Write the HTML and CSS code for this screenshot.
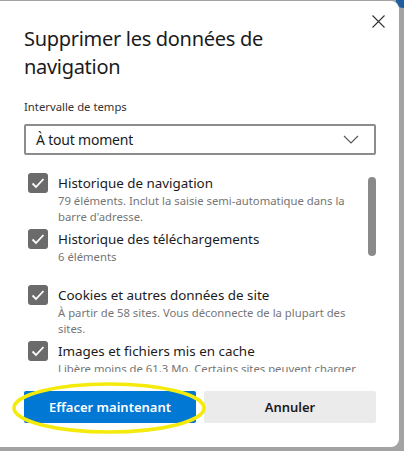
FILE: index.html
```html
<!DOCTYPE html>
<html lang="fr">
<head>
<meta charset="utf-8">
<link rel="stylesheet" href="styles.css">
</head>
<body>
<div class="backdrop">
  <span class="bg-dot"></span>
  <div class="dialog">
    <button class="close" aria-label="Fermer">
      <svg width="13" height="13" viewBox="0 0 13 13"><path d="M0.5 0.5L12.5 12.5M12.5 0.5L0.5 12.5" stroke="#333" stroke-width="1.1" fill="none"/></svg>
    </button>
    <h1 class="title">Supprimer les données de navigation</h1>
    <div class="field-label">Intervalle de temps</div>
    <div class="select">
      <span>À tout moment</span>
      <svg width="16" height="9" viewBox="0 0 16 9"><path d="M1 1L8 8L15 1" stroke="#555" stroke-width="1.1" fill="none"/></svg>
    </div>
    <div class="list-wrap">
      <div class="list">
        <div class="item">
          <span class="check"><svg width="14" height="12" viewBox="0 0 14 12"><path d="M1.5 6.5L5 10L12.5 2" stroke="#fff" stroke-width="1.8" fill="none"/></svg></span>
          <div class="text">
            <div class="label">Historique de navigation</div>
            <div class="desc">79 éléments. Inclut la saisie semi-automatique dans la barre d'adresse.</div>
          </div>
        </div>
        <div class="item">
          <span class="check"><svg width="14" height="12" viewBox="0 0 14 12"><path d="M1.5 6.5L5 10L12.5 2" stroke="#fff" stroke-width="1.8" fill="none"/></svg></span>
          <div class="text">
            <div class="label">Historique des téléchargements</div>
            <div class="desc">6 éléments</div>
          </div>
        </div>
        <div class="item">
          <span class="check"><svg width="14" height="12" viewBox="0 0 14 12"><path d="M1.5 6.5L5 10L12.5 2" stroke="#fff" stroke-width="1.8" fill="none"/></svg></span>
          <div class="text">
            <div class="label">Cookies et autres données de site</div>
            <div class="desc">À partir de 58 sites. Vous déconnecte de la plupart des sites.</div>
          </div>
        </div>
        <div class="item">
          <span class="check"><svg width="14" height="12" viewBox="0 0 14 12"><path d="M1.5 6.5L5 10L12.5 2" stroke="#fff" stroke-width="1.8" fill="none"/></svg></span>
          <div class="text">
            <div class="label">Images et fichiers mis en cache</div>
            <div class="desc">Libère moins de 61,3 Mo. Certains sites peuvent charger plus lentement lors de votre prochaine visite.</div>
          </div>
        </div>
      </div>
      <div class="scrollbar"><span class="thumb"></span></div>
    </div>
    <div class="footer">
      <button class="btn primary">Effacer maintenant</button>
      <button class="btn secondary">Annuler</button>
      <svg class="highlight" width="194" height="52" viewBox="0 0 194 52"><ellipse cx="97" cy="26" rx="95" ry="24" fill="none" stroke="#f4ea0c" stroke-width="3.5"/></svg>
    </div>
  </div>
</div>
</body>
</html>
```

FILE: styles.css
```css
* { box-sizing: border-box; }
html, body { margin: 0; padding: 0; }
body {
  width: 404px;
  height: 451px;
  overflow: hidden;
  background: #a3a3a3;
  font-family: "Noto Sans", "Open Sans", sans-serif;
}
.backdrop {
  position: relative;
  width: 404px;
  height: 451px;
  padding-top: 1px;
}
.bg-dot {
  position: absolute;
  right: -6px;
  top: -6px;
  width: 14px;
  height: 14px;
  border-radius: 50%;
  background: #1f5f9e;
}
.dialog {
  position: relative;
  width: 399px;
  height: 446px;
  background: #fff;
  border-radius: 0 8px 8px 0;
  padding: 24px 23px 0 24px;
  display: flex;
  flex-direction: column;
}
.close {
  position: absolute;
  top: 13px;
  right: 13px;
  width: 15px;
  height: 15px;
  padding: 1px;
  border: 0;
  background: transparent;
  display: flex;
}
.title {
  margin: 0;
  font-size: 20px;
  letter-spacing: -0.3px;
  line-height: 28px;
  font-weight: 400;
  color: #1b1b1b;
  max-width: 300px;
}
.field-label {
  margin-top: 18px;
  font-size: 11.3px;
  line-height: 16px;
  color: #333;
}
.select {
  margin-top: 9px;
  height: 31px;
  border: 2px solid #8c8c8c;
  border-radius: 2px;
  display: flex;
  align-items: center;
  justify-content: space-between;
  padding: 0 15px 0 10px;
  font-size: 14px;
  letter-spacing: -0.2px;
  color: #1b1b1b;
}
.list-wrap {
  margin-top: 18px;
  height: 199px;
  overflow: hidden;
  display: flex;
  position: relative;
}
.list {
  flex: 1;
  display: flex;
  flex-direction: column;
}
.item {
  display: flex;
  gap: 10px;
  padding-left: 4px;
  min-height: 56px;
}
.check {
  flex: none;
  width: 20px;
  height: 20px;
  border-radius: 3px;
  background: #6b6b6b;
  display: flex;
  align-items: center;
  justify-content: center;
}
.text { flex: 1; padding-right: 6px; }
.label {
  font-size: 13.4px;
  line-height: 20px;
  color: #1b1b1b;
}
.desc {
  font-size: 11.3px;
  line-height: 16px;
  color: #767676;
}
.scrollbar {
  flex: none;
  width: 8px;
  padding-top: 4px;
}
.thumb {
  display: block;
  width: 8px;
  height: 79px;
  border-radius: 4px;
  background: #8a8a8a;
}
.footer {
  position: relative;
  margin-top: 19px;
  display: flex;
  gap: 8px;
}
.btn {
  flex: 1;
  height: 32px;
  border: 0;
  border-radius: 2px;
  font-family: inherit;
  font-size: 13px;
  font-weight: 600;
}
.primary { background: #0078d4; color: #fff; }
.secondary { background: #ebebeb; color: #1b1b1b; }
.highlight {
  position: absolute;
  left: -12px;
  top: -9px;
}
```
